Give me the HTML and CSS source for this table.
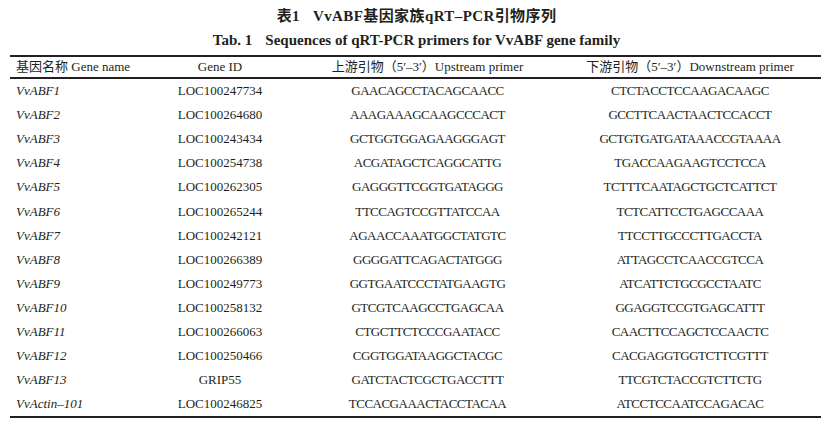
FILE: index.html
```html
<!DOCTYPE html>
<html lang="zh">
<head>
<meta charset="utf-8">
<title>表1 VvABF基因家族qRT-PCR引物序列</title>
<link rel="stylesheet" href="styles.css">
</head>
<body>
<div class="page">
  <div class="title-zh">表1<span class="gap"></span>VvABF基因家族qRT–PCR引物序列</div>
  <div class="title-en">Tab. 1<span class="gap"></span>Sequences of qRT-PCR primers for VvABF gene family</div>
  <table class="primers">
    <colgroup>
      <col class="c1"><col class="c2"><col class="c3"><col class="c4">
    </colgroup>
    <thead>
      <tr>
        <th class="name">基因名称 Gene name</th>
        <th>Gene ID</th>
        <th>上游引物（5′–3′）Upstream primer</th>
        <th>下游引物（5′–3′）Downstream primer</th>
      </tr>
    </thead>
    <tbody>
      <tr><td class="name">VvABF1</td><td>LOC100247734</td><td class="seq">GAACAGCCTACAGCAACC</td><td class="seq">CTCTACCTCCAAGACAAGC</td></tr>
      <tr><td class="name">VvABF2</td><td>LOC100264680</td><td class="seq">AAAGAAAGCAAGCCCACT</td><td class="seq">GCCTTCAACTAACTCCACCT</td></tr>
      <tr><td class="name">VvABF3</td><td>LOC100243434</td><td class="seq">GCTGGTGGAGAAGGGAGT</td><td class="seq">GCTGTGATGATAAACCGTAAAA</td></tr>
      <tr><td class="name">VvABF4</td><td>LOC100254738</td><td class="seq">ACGATAGCTCAGGCATTG</td><td class="seq">TGACCAAGAAGTCCTCCA</td></tr>
      <tr><td class="name">VvABF5</td><td>LOC100262305</td><td class="seq">GAGGGTTCGGTGATAGGG</td><td class="seq">TCTTTCAATAGCTGCTCATTCT</td></tr>
      <tr><td class="name">VvABF6</td><td>LOC100265244</td><td class="seq">TTCCAGTCCGTTATCCAA</td><td class="seq">TCTCATTCCTGAGCCAAA</td></tr>
      <tr><td class="name">VvABF7</td><td>LOC100242121</td><td class="seq">AGAACCAAATGGCTATGTC</td><td class="seq">TTCCTTGCCCTTGACCTA</td></tr>
      <tr><td class="name">VvABF8</td><td>LOC100266389</td><td class="seq">GGGGATTCAGACTATGGG</td><td class="seq">ATTAGCCTCAACCGTCCA</td></tr>
      <tr><td class="name">VvABF9</td><td>LOC100249773</td><td class="seq">GGTGAATCCCTATGAAGTG</td><td class="seq">ATCATTCTGCGCCTAATC</td></tr>
      <tr><td class="name">VvABF10</td><td>LOC100258132</td><td class="seq">GTCGTCAAGCCTGAGCAA</td><td class="seq">GGAGGTCCGTGAGCATTT</td></tr>
      <tr><td class="name">VvABF11</td><td>LOC100266063</td><td class="seq">CTGCTTCTCCCGAATACC</td><td class="seq">CAACTTCCAGCTCCAACTC</td></tr>
      <tr><td class="name">VvABF12</td><td>LOC100250466</td><td class="seq">CGGTGGATAAGGCTACGC</td><td class="seq">CACGAGGTGGTCTTCGTTT</td></tr>
      <tr><td class="name">VvABF13</td><td>GRIP55</td><td class="seq">GATCTACTCGCTGACCTTT</td><td class="seq">TTCGTCTACCGTCTTCTG</td></tr>
      <tr><td class="name">VvActin–101</td><td>LOC100246825</td><td class="seq">TCCACGAAACTACCTACAA</td><td class="seq">ATCCTCCAATCCAGACAC</td></tr>
    </tbody>
  </table>
</div>
</body>
</html>
```

FILE: styles.css
```css
html, body {
  margin: 0;
  padding: 0;
  background: #ffffff;
}

body {
  font-family: "Liberation Serif", "Noto Sans CJK SC", serif;
  color: #231f20;
}

.page {
  padding: 4px 13px 0 10px;
}

.title-zh,
.title-en {
  text-align: center;
  font-weight: bold;
  font-size: 15px;
  line-height: 24px;
  padding-left: 2px;
}

.title-zh {
  letter-spacing: 0.4px;
}

.gap {
  display: inline-block;
  width: 13px;
}

.primers {
  width: 811px;
  margin-top: 3px;
  border-collapse: collapse;
  table-layout: fixed;
  font-size: 13px;
  border-top: 2px solid #231f20;
  border-bottom: 2px solid #231f20;
}

.c1 { width: 134px; }
.c2 { width: 152px; }
.c3 { width: 263px; }
.c4 { width: 262px; }

.primers th {
  font-weight: normal;
  text-align: center;
  height: 20px;
  padding: 0;
  line-height: 20px;
  border-bottom: 2px solid #231f20;
  white-space: nowrap;
}

.primers td {
  text-align: center;
  padding: 0;
  height: 24.1px;
  line-height: 24px;
  white-space: nowrap;
}

.primers .name {
  text-align: left;
  padding-left: 6px;
}

.primers td.name {
  font-style: italic;
}

.primers td.seq {
  letter-spacing: -0.5px;
}
```
